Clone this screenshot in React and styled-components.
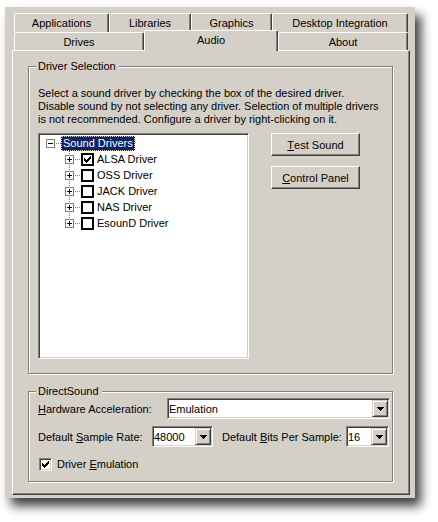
import React from 'react';
import styled, { createGlobalStyle, css } from 'styled-components';

const FACE = '#d4d0c8';
const SHADOW = '#808080';
const DARK = '#404040';

const GlobalStyle = createGlobalStyle`
  html, body { margin: 0; padding: 0; background: #fff; }
  body {
    font-family: "Liberation Sans", Arial, sans-serif;
    font-size: 11px;
    color: #000;
  }
  #root { width: 438px; height: 522px; }
`;

const Screen = styled.div`
  width: 438px;
  height: 522px;
  box-sizing: border-box;
  padding: 7px 0 0 5px;
`;

const Window = styled.div`
  width: 410px;
  height: 491px;
  box-sizing: border-box;
  padding: 6px 5px 0 7px;
  background: ${FACE};
  box-shadow: 6px 8px 10px rgba(0, 0, 0, 0.75);
`;

const TabStrip = styled.div`
  display: flex;
  flex-direction: column;
  padding: 0 2px;
`;

const TabRow = styled.div`
  display: flex;
  height: ${(p) => p.$h}px;
`;

const Tab = styled.div`
  box-sizing: border-box;
  width: ${(p) => p.$w}px;
  height: ${(p) => p.$h}px;
  background: ${FACE};
  border-top: 1px solid #fff;
  border-left: 1px solid #fff;
  border-right: 1px solid ${DARK};
  box-shadow: inset -1px 0 0 ${SHADOW};
  border-radius: 2px 2px 0 0;
  display: flex;
  align-items: center;
  justify-content: center;
  white-space: nowrap;
  ${(p) =>
    p.$active &&
    css`
      position: relative;
      z-index: 2;
      margin-top: -2px;
      height: 21px;
      padding-bottom: 3px;
    `}
`;

const Pane = styled.div`
  box-sizing: border-box;
  width: 398px;
  height: 445px;
  border-top: 1px solid #fff;
  border-left: 1px solid #fff;
  border-right: 1px solid ${DARK};
  border-bottom: 1px solid ${DARK};
  box-shadow: inset -1px -1px 0 ${SHADOW};
  padding: 15px 0 0 15px;
  display: flex;
  flex-direction: column;
  gap: 17px;
`;

const Group = styled.div`
  position: relative;
  box-sizing: border-box;
  width: 365px;
  height: ${(p) => p.$h}px;
  padding: ${(p) => p.$pad};
  border: 1px solid ${SHADOW};
  box-shadow: 1px 1px 0 #fff, inset 1px 1px 0 #fff;
`;

const Caption = styled.span`
  position: absolute;
  top: -7px;
  left: 7px;
  padding: 0 3px 0 2px;
  line-height: 13px;
  background: ${FACE};
  white-space: nowrap;
`;

const Info = styled.p`
  margin: 0;
  line-height: 13px;
  white-space: nowrap;
`;

const DriverArea = styled.div`
  display: flex;
  align-items: flex-start;
  margin-top: 7px;
`;

const TreeBox = styled.div`
  box-sizing: border-box;
  width: 211px;
  height: 226px;
  background: #fff;
  border: 1px solid;
  border-color: ${SHADOW} #fff #fff ${SHADOW};
  box-shadow: inset 1px 1px 0 ${DARK}, inset -1px -1px 0 ${FACE};
  padding: 1px 0 0 7px;
`;

const TreeRow = styled.div`
  display: flex;
  align-items: center;
  height: 16px;
  padding-left: ${(p) => p.$depth * 19}px;
  white-space: nowrap;
`;

const Expander = styled.span`
  position: relative;
  box-sizing: border-box;
  width: 9px;
  height: 9px;
  border: 1px solid ${SHADOW};
  background: #fff;
  flex: none;
  &::before {
    content: '';
    position: absolute;
    left: 1px;
    top: 3px;
    width: 5px;
    height: 1px;
    background: #000;
  }
  ${(p) =>
    !p.$open &&
    css`
      &::after {
        content: '';
        position: absolute;
        left: 3px;
        top: 1px;
        width: 1px;
        height: 5px;
        background: #000;
      }
    `}
`;

const HLine = styled.span`
  width: ${(p) => p.$w}px;
  height: 1px;
  flex: none;
  background-image: linear-gradient(to right, ${SHADOW} 50%, transparent 50%);
  background-size: 2px 1px;
  background-position: 1px 0;
`;

const ChildList = styled.div`
  position: relative;
  &::before {
    content: '';
    position: absolute;
    left: 23px;
    top: 0;
    bottom: 8px;
    width: 1px;
    background-image: linear-gradient(to bottom, ${SHADOW} 50%, transparent 50%);
    background-size: 1px 2px;
  }
`;

const RootLabel = styled.span`
  box-sizing: border-box;
  height: 15px;
  line-height: 13px;
  padding: 1px 2px 1px 2px;
  background: #0a246a;
  color: #fff;
  outline: 1px dotted #f0c878;
  outline-offset: -1px;
`;

const StateBox = styled.span`
  box-sizing: border-box;
  width: 13px;
  height: 13px;
  flex: none;
  border: 2px solid #000;
  background: #fff;
  display: flex;
  align-items: center;
  justify-content: center;
`;

const ItemLabel = styled.span`
  margin-left: 3px;
  line-height: 13px;
`;

const ButtonColumn = styled.div`
  display: flex;
  flex-direction: column;
  gap: 10px;
  margin-left: 22px;
`;

const PushButton = styled.button`
  box-sizing: border-box;
  width: 89px;
  height: 23px;
  padding: 0;
  font: inherit;
  color: #000;
  background: ${FACE};
  border: 1px solid;
  border-color: #fff ${DARK} ${DARK} #fff;
  box-shadow: inset -1px -1px 0 ${SHADOW};
  display: flex;
  align-items: center;
  justify-content: center;
`;

const Key = styled.span`
  text-decoration: underline;
  text-underline-offset: 1px;
`;

const FieldRow = styled.div`
  display: flex;
  align-items: center;
  height: ${(p) => p.$h || 21}px;
  margin-top: ${(p) => p.$mt || 0}px;
  white-space: nowrap;
`;

const FieldLabel = styled.span`
  width: ${(p) => p.$w}px;
  flex: none;
  margin-left: ${(p) => p.$ml || 0}px;
`;

const Combo = styled.div`
  box-sizing: border-box;
  width: ${(p) => p.$w}px;
  height: 21px;
  flex: none;
  background: #fff;
  border: 1px solid;
  border-color: ${SHADOW} #fff #fff ${SHADOW};
  box-shadow: inset 1px 1px 0 ${DARK}, inset -1px -1px 0 ${FACE};
  padding: 1px;
  display: flex;
  align-items: stretch;
`;

const ComboValue = styled.span`
  flex: 1;
  display: flex;
  align-items: center;
  padding-left: 0px;
  padding-top: 1px;
`;

const DropButton = styled.span`
  box-sizing: border-box;
  width: 16px;
  flex: none;
  background: ${FACE};
  border: 1px solid;
  border-color: ${FACE} ${DARK} ${DARK} ${FACE};
  box-shadow: inset 1px 1px 0 #fff, inset -1px -1px 0 ${SHADOW};
  display: flex;
  align-items: center;
  justify-content: center;
`;

const CheckField = styled.span`
  box-sizing: border-box;
  width: 13px;
  height: 13px;
  flex: none;
  margin-left: 1px;
  background: #fff;
  border: 1px solid;
  border-color: ${SHADOW} #fff #fff ${SHADOW};
  box-shadow: inset 1px 1px 0 ${DARK}, inset -1px -1px 0 ${FACE};
  display: flex;
  align-items: center;
  justify-content: center;
`;

const CheckText = styled.span`
  margin-left: 5px;
`;

const CheckMark = () => (
  <svg width="7" height="7" viewBox="0 0 7 7" shapeRendering="crispEdges">
    <path
      fill="#000"
      d="M6 0h1v3h-1v1h-1v1h-1v1h-1v1h-1v-1h-1v-1h-1v-3h1v1h1v1h1v-1h1v-1h1z"
    />
  </svg>
);

const Arrow = () => (
  <svg width="7" height="4" viewBox="0 0 7 4" shapeRendering="crispEdges">
    <path fill="#000" d="M0 0h7v1h-1v1h-1v1h-1v1h-1v-1h-1v-1h-1v-1h-1z" />
  </svg>
);

const drivers = [
  { name: 'ALSA Driver', checked: true },
  { name: 'OSS Driver', checked: false },
  { name: 'JACK Driver', checked: false },
  { name: 'NAS Driver', checked: false },
  { name: 'EsounD Driver', checked: false },
];

const ComboBox = ({ width, value }) => (
  <Combo $w={width}>
    <ComboValue>{value}</ComboValue>
    <DropButton>
      <Arrow />
    </DropButton>
  </Combo>
);

export default function App() {
  return (
    <Screen>
      <GlobalStyle />
      <Window>
        <TabStrip>
          <TabRow $h={19}>
            <Tab $w={95} $h={19}>Applications</Tab>
            <Tab $w={82} $h={19}>Libraries</Tab>
            <Tab $w={81} $h={19}>Graphics</Tab>
            <Tab $w={136} $h={19}>Desktop Integration</Tab>
          </TabRow>
          <TabRow $h={18}>
            <Tab $w={130} $h={18}>Drives</Tab>
            <Tab $w={134} $h={18} $active>Audio</Tab>
            <Tab $w={130} $h={18}>About</Tab>
          </TabRow>
        </TabStrip>
        <Pane>
          <Group $h={308} $pad="20px 0 0 9px">
            <Caption>Driver Selection</Caption>
            <Info>
              Select a sound driver by checking the box of the desired driver.
              <br />
              Disable sound by not selecting any driver. Selection of multiple drivers
              <br />
              is not recommended. Configure a driver by right-clicking on it.
            </Info>
            <DriverArea>
              <TreeBox>
                <TreeRow $depth={0}>
                  <Expander $open />
                  <HLine $w={6} />
                  <RootLabel>Sound Drivers</RootLabel>
                </TreeRow>
                <ChildList>
                  {drivers.map((d) => (
                    <TreeRow $depth={1} key={d.name}>
                      <Expander />
                      <HLine $w={7} />
                      <StateBox>{d.checked && <CheckMark />}</StateBox>
                      <ItemLabel>{d.name}</ItemLabel>
                    </TreeRow>
                  ))}
                </ChildList>
              </TreeBox>
              <ButtonColumn>
                <PushButton>
                  <Key>T</Key>est Sound
                </PushButton>
                <PushButton>
                  <Key>C</Key>ontrol Panel
                </PushButton>
              </ButtonColumn>
            </DriverArea>
          </Group>
          <Group $h={91} $pad="6px 0 0 9px">
            <Caption>DirectSound</Caption>
            <FieldRow>
              <FieldLabel $w={129}>
                <Key>H</Key>ardware Acceleration:
              </FieldLabel>
              <ComboBox width={223} value="Emulation" />
            </FieldRow>
            <FieldRow $mt={7}>
              <FieldLabel $w={114}>
                Default <Key>S</Key>ample Rate:
              </FieldLabel>
              <ComboBox width={61} value="48000" />
              <FieldLabel $w={124} $ml={9}>
                Default <Key>B</Key>its Per Sample:
              </FieldLabel>
              <ComboBox width={43} value="16" />
            </FieldRow>
            <FieldRow $h={22} $mt={6}>
              <CheckField>
                <CheckMark />
              </CheckField>
              <CheckText>
                Driver <Key>E</Key>mulation
              </CheckText>
            </FieldRow>
          </Group>
        </Pane>
      </Window>
    </Screen>
  );
}
